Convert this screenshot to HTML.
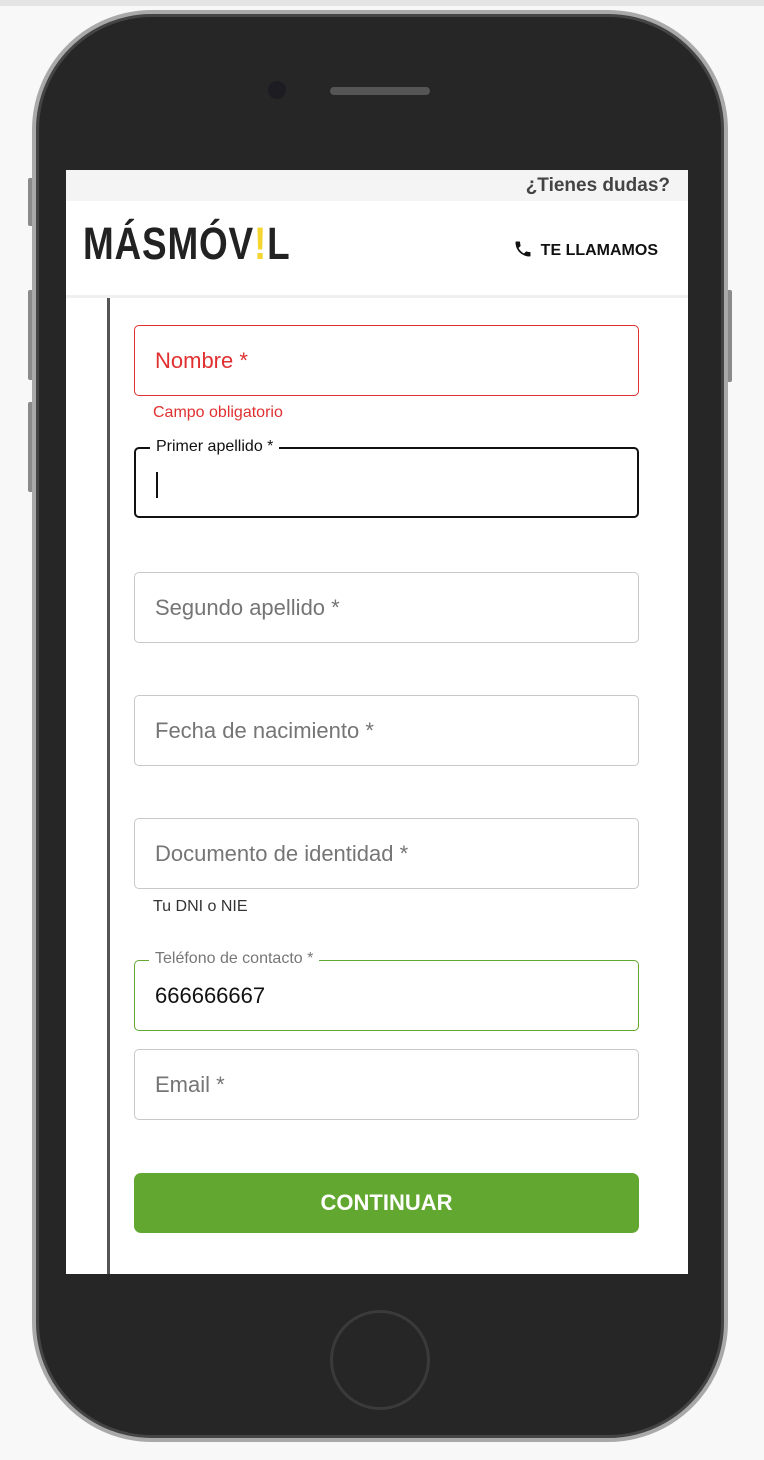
<!DOCTYPE html>
<html><head><style>
*{margin:0;padding:0;box-sizing:border-box}
body{width:764px;height:1460px;background:#f8f8f8;position:relative;overflow:hidden;font-family:"Liberation Sans",sans-serif}
.strip{position:absolute;left:0;top:0;width:764px;height:6px;background:#e4e4e4}
.btn{position:absolute;background:#8a8a8a;border-radius:2px}
.phone{position:absolute;left:32px;top:10px;width:696px;height:1432px;border-radius:120px;background:#262626;border:4px solid #a9a9a9;box-shadow:inset 0 0 0 3px #444}
.screen{position:absolute;left:66px;top:170px;width:622px;height:1104px;background:#fff;overflow:hidden}
.top{height:31px;background:#f4f4f4;text-align:right;padding-right:18px;font-size:19px;line-height:31px;color:#444;font-weight:bold}
.hdr{height:97px;border-bottom:3px solid #f0f0f0;position:relative}
.logo{position:absolute;left:17px;top:17px;font-size:45px;font-weight:bold;color:#222;letter-spacing:1px;transform:scaleX(.82);transform-origin:left;font-family:"Liberation Sans Narrow","Liberation Sans",sans-serif}
.call{position:absolute;right:30px;top:38px;font-size:16px;font-weight:bold;color:#111}
.vline{position:absolute;left:41px;top:128px;width:3px;height:976px;background:#555}
.f{position:absolute;left:68px;width:505px;height:71px;border:1.5px solid #c8c8c8;border-radius:5px;font-size:22px;color:#757575;padding-left:20px;line-height:70px}
.lbl{position:absolute;left:14px;top:-12px;background:#fff;padding:0 6px;font-size:16px;line-height:20px}
.help{position:absolute;left:87px;font-size:16px}
.go{position:absolute;left:68px;top:1003px;width:505px;height:60px;background:#62a830;border-radius:7px;color:#fff;font-weight:bold;font-size:22px;text-align:center;line-height:60px}
</style></head><body>
<div class="strip"></div>
<div class="btn" style="left:28px;top:178px;width:6px;height:48px"></div>
<div class="btn" style="left:28px;top:290px;width:6px;height:90px"></div>
<div class="btn" style="left:28px;top:402px;width:6px;height:90px"></div>
<div class="btn" style="left:726px;top:290px;width:6px;height:92px"></div>
<div class="phone"></div>
<div style="position:absolute;left:268px;top:81px;width:18px;height:18px;border-radius:50%;background:#1c1c22"></div>
<div style="position:absolute;left:330px;top:87px;width:100px;height:8px;border-radius:4px;background:#555"></div>
<div style="position:absolute;left:330px;top:1310px;width:100px;height:100px;border-radius:50%;border:3px solid #3a3a3a"></div>
<div class="screen">
<div class="top">¿Tienes dudas?</div>
<div class="hdr"><div class="logo">MÁSMÓV<span style="color:#f5d52f">!</span>L</div>
<div class="call"><svg width="20" height="20" viewBox="0 0 24 24" style="vertical-align:-4px;margin-right:8px"><path fill="#111" d="M6.6 10.8c1.4 2.8 3.8 5.1 6.6 6.6l2.2-2.2c.3-.3.7-.4 1-.2 1.1.4 2.3.6 3.6.6.6 0 1 .4 1 1V20c0 .6-.4 1-1 1C10.6 21 3 13.4 3 4c0-.6.4-1 1-1h3.5c.6 0 1 .4 1 1 0 1.3.2 2.5.6 3.6.1.3 0 .7-.2 1z"/></svg>TE LLAMAMOS</div></div>
<div class="vline"></div>
<div class="f" style="top:155px;border-color:#e03030;color:#e03030">Nombre *</div>
<div class="help" style="top:234px;color:#e03030">Campo obligatorio</div>
<div class="f" style="top:277px;border:2.5px solid #111;color:#111"><span class="lbl" style="color:#111">Primer apellido *</span><span style="display:inline-block;width:2px;height:26px;background:#111;vertical-align:middle"></span></div>
<div class="f" style="top:402px">Segundo apellido *</div>
<div class="f" style="top:525px">Fecha de nacimiento *</div>
<div class="f" style="top:648px">Documento de identidad *</div>
<div class="help" style="top:728px;color:#333">Tu DNI o NIE</div>
<div class="f" style="top:790px;border-color:#62a830;color:#111"><span class="lbl" style="color:#777">Teléfono de contacto *</span>666666667</div>
<div class="f" style="top:879px">Email *</div>
<div class="go">CONTINUAR</div>
</div>
</body></html>
